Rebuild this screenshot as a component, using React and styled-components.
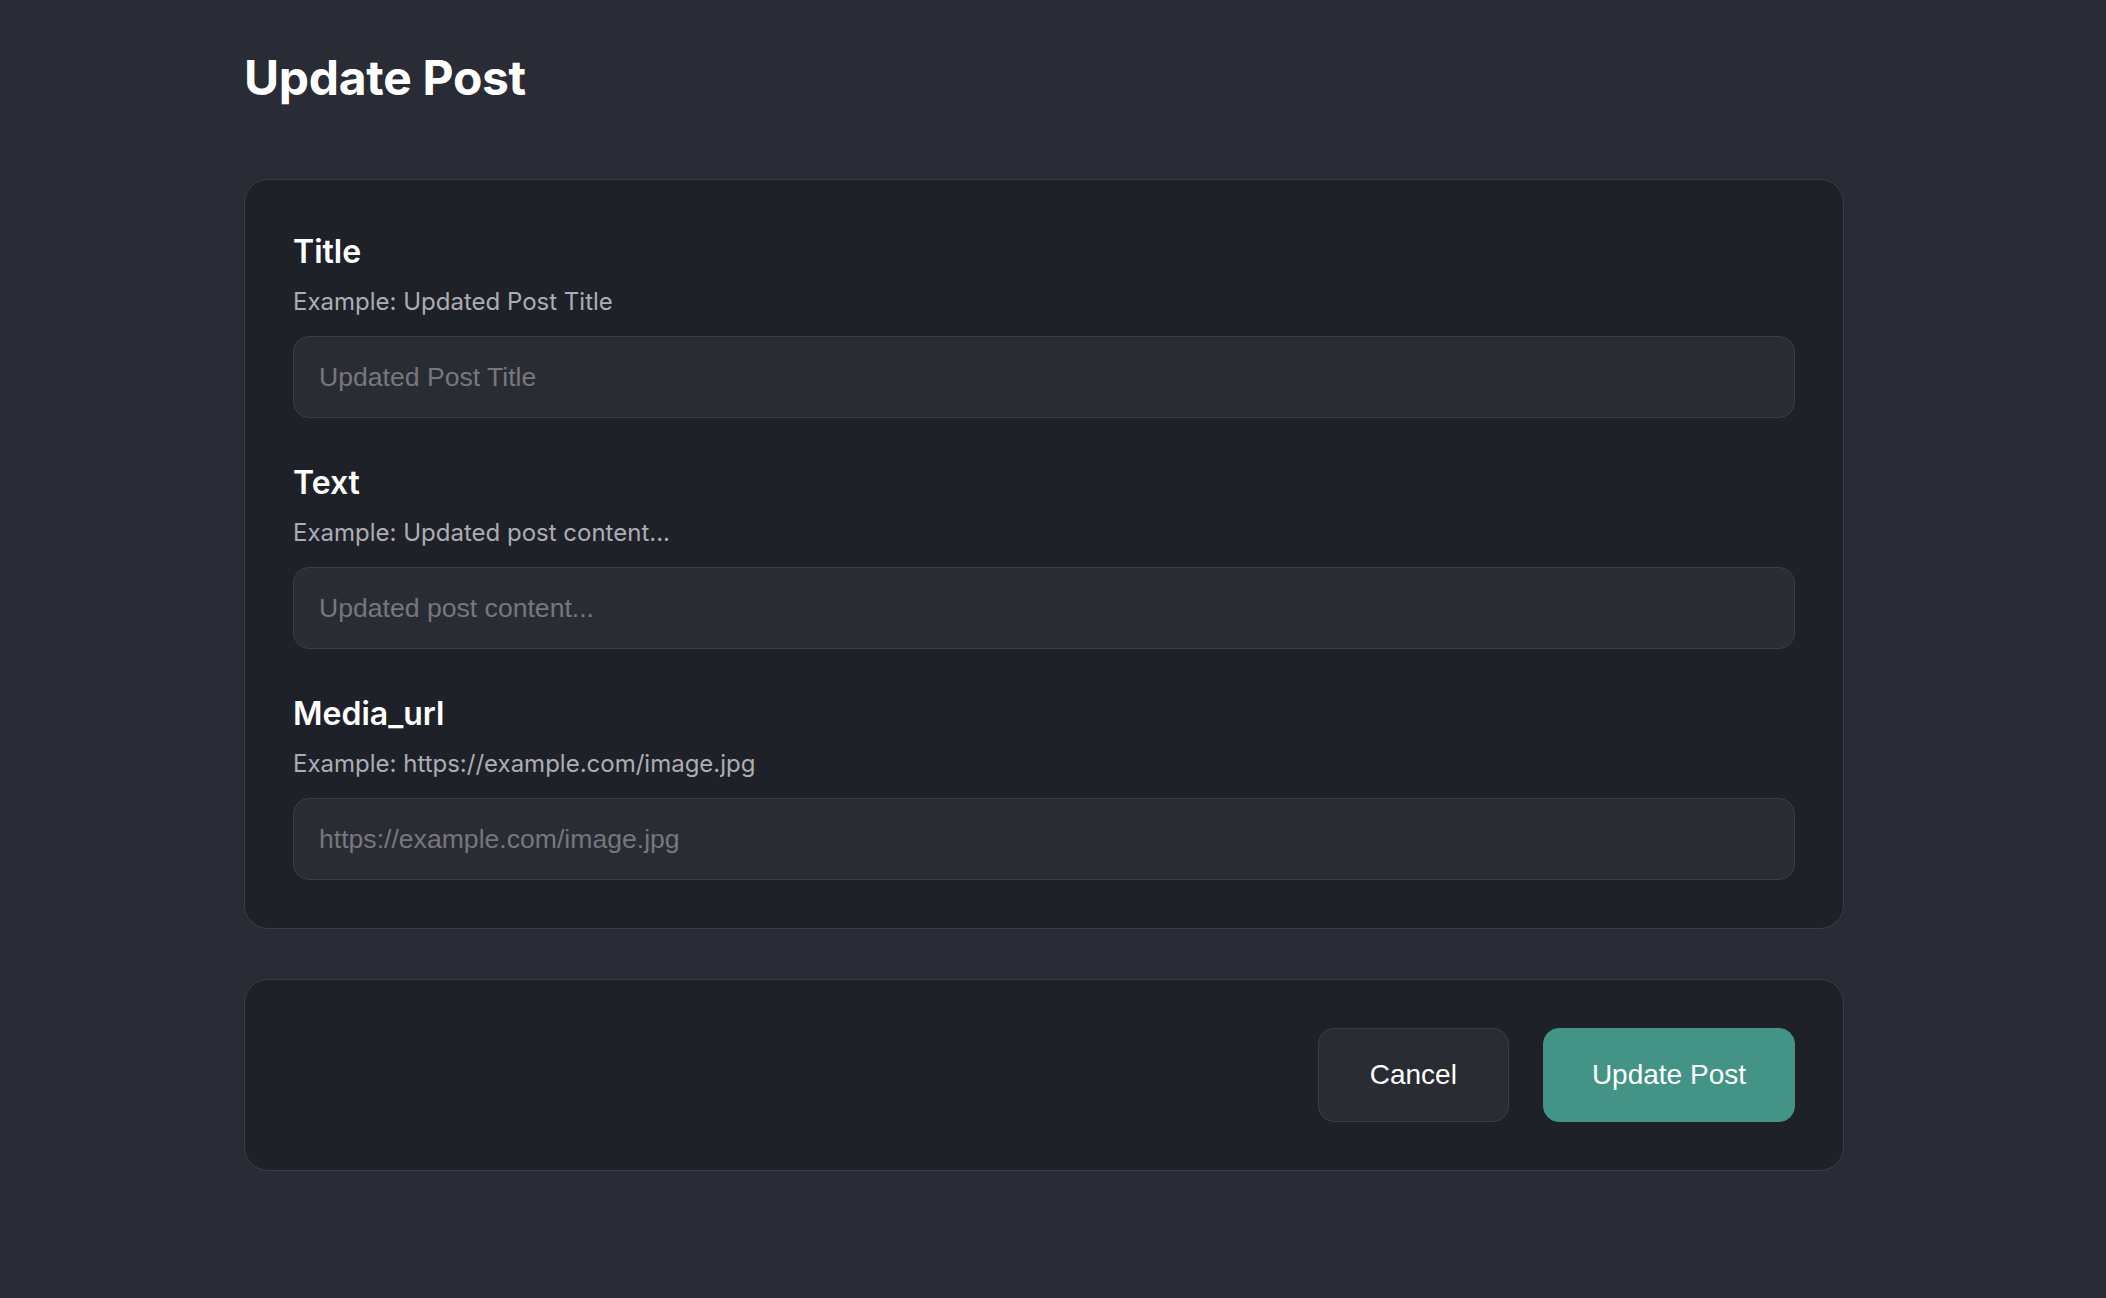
import React from "react";
import styled, { createGlobalStyle } from "styled-components";

const GlobalStyle = createGlobalStyle`
  html, body {
    margin: 0;
    padding: 0;
    background: #292c35;
  }
  body {
    font-family: Inter, "Noto Sans", sans-serif;
    color: #ffffff;
  }
`;

const Page = styled.main`
  min-height: 1298px;
  box-sizing: border-box;
  padding: 49px 0 0 244px;
`;

const Wrap = styled.div`
  width: 1600px;
  display: flex;
  flex-direction: column;
`;

const Heading = styled.h1`
  margin: 0 0 72px;
  font-size: 48px;
  line-height: 58px;
  font-weight: 700;
  letter-spacing: -0.3px;
  color: #ffffff;
`;

const Card = styled.section`
  box-sizing: border-box;
  background: #1f2129;
  border: 1px solid #3a3d4a;
  border-radius: 24px;
  padding: 48px;
  display: flex;
  flex-direction: column;
  gap: ${p => p.$gap || 0}px;
`;

const Footer = styled(Card)`
  margin-top: 50px;
  flex-direction: row;
  justify-content: flex-end;
  gap: 34px;
`;

const Field = styled.div`
  display: flex;
  flex-direction: column;
`;

const Label = styled.label`
  font-size: 32px;
  line-height: 48px;
  font-weight: 600;
  color: #ffffff;
  margin-bottom: 8px;
`;

const Hint = styled.p`
  margin: 0 0 16px;
  font-size: 24px;
  line-height: 36px;
  color: #adadb3;
`;

const Input = styled.input`
  box-sizing: border-box;
  height: 82px;
  width: 100%;
  padding: 0 25px;
  background: #2a2c34;
  border: 1px solid #3a3d4a;
  border-radius: 16px;
  font-family: "Liberation Sans", Arial, sans-serif;
  font-size: 26.6px;
  color: #ffffff;
  outline: none;

  &::placeholder {
    color: #77777c;
  }
`;

const Button = styled.button`
  box-sizing: border-box;
  height: 94px;
  padding: 0 ${p => (p.$primary ? 48 : 51)}px;
  border-radius: 16px;
  border: 1px solid ${p => (p.$primary ? "#439486" : "#3a3d4a")};
  background: ${p => (p.$primary ? "#439486" : "#2a2c34")};
  color: #ffffff;
  font-family: "Liberation Sans", Arial, sans-serif;
  font-size: 28px;
  cursor: pointer;
`;

const fields = [
  { name: "Title", hint: "Example: Updated Post Title", placeholder: "Updated Post Title" },
  { name: "Text", hint: "Example: Updated post content...", placeholder: "Updated post content..." },
  { name: "Media_url", hint: "Example: https://example.com/image.jpg", placeholder: "https://example.com/image.jpg" },
];

export default function App() {
  return (
    <Page>
      <GlobalStyle />
      <Wrap>
        <Heading>Update Post</Heading>
        <Card $gap={41}>
          {fields.map(f => (
            <Field key={f.name}>
              <Label>{f.name}</Label>
              <Hint>{f.hint}</Hint>
              <Input placeholder={f.placeholder} />
            </Field>
          ))}
        </Card>
        <Footer>
          <Button>Cancel</Button>
          <Button $primary>Update Post</Button>
        </Footer>
      </Wrap>
    </Page>
  );
}
